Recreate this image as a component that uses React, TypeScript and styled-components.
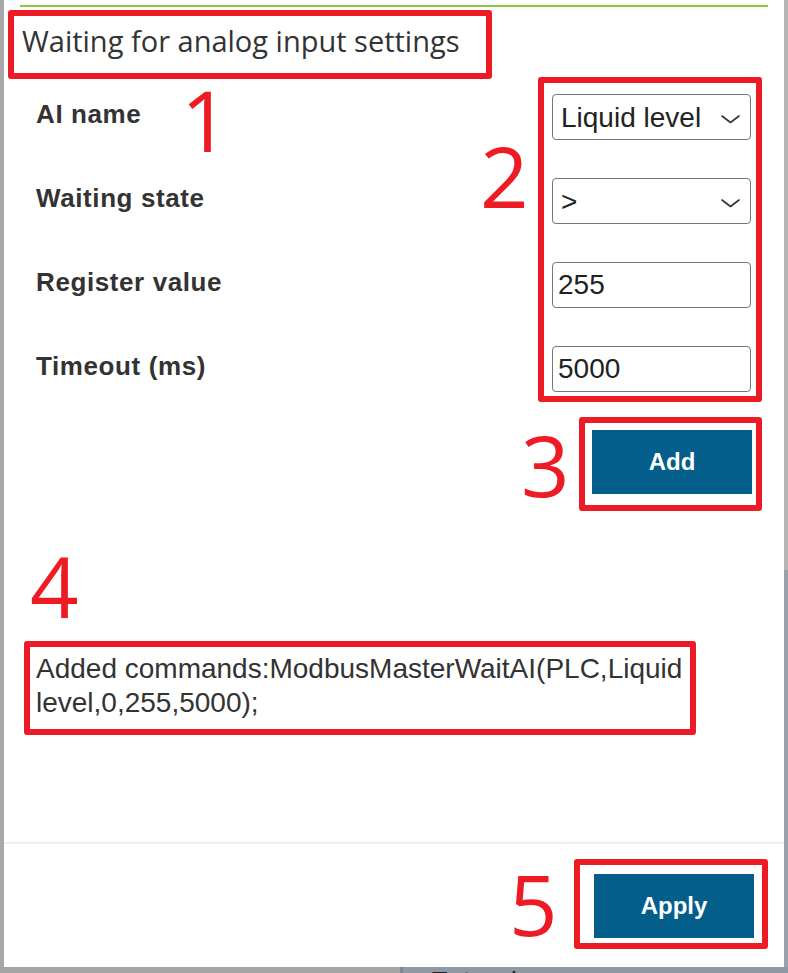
import React from 'react';
import styled, { createGlobalStyle } from 'styled-components';

const RED = '#ed1c24';
const BLUE = '#035e8c';
const TEXT = '#333333';

const GlobalStyle = createGlobalStyle`
  html, body { margin: 0; padding: 0; background: #a7a7a7; }
  body { width: 788px; height: 973px; overflow: hidden; }
  *, *::before, *::after { box-sizing: border-box; }
`;

const Page = styled.div`
  position: relative;
  width: 788px;
  height: 973px;
  overflow: hidden;
  display: flex;
  flex-direction: column;
  background: #a7a7a7;
`;

const TopRow = styled.div`
  display: flex;
  height: 967px;
`;

const LeftEdge = styled.div`
  width: 4px;
  background: #a8a8a8;
`;

const RightEdge = styled.div`
  width: 4px;
  background: linear-gradient(#b4b4b4 0 570px, #9aa1aa 570px);
`;

const Dialog = styled.div`
  width: 780px;
  background: #ffffff;
  display: flex;
  flex-direction: column;
`;

const GreenRule = styled.div`
  height: 2px;
  margin: 5px 16px 0 16px;
  background: #8dc63f;
`;

const Annot = styled.div`
  border: 6px solid ${RED};
  border-radius: 3px;
`;

const TitleBox = styled(Annot)`
  margin: 3px 0 0 4px;
  width: 484px;
  height: 69px;
  padding: 5px 0 0 8px;
`;

const Title = styled.h2`
  margin: 0;
  font-family: 'Open Sans', 'Noto Sans', sans-serif;
  font-weight: 400;
  font-size: 29px;
  line-height: 40px;
  color: ${TEXT};
  white-space: nowrap;
`;

const FormRow = styled.div`
  margin-top: -2px;
  padding: 0 22px 0 32px;
  display: flex;
  justify-content: space-between;
  align-items: flex-start;
`;

const LabelColumn = styled.div`
  padding-top: 14px;
  display: flex;
  flex-direction: column;
  gap: 38px;
`;

const Label = styled.div`
  height: 46px;
  line-height: 46px;
  font-family: 'Liberation Sans', Arial, sans-serif;
  font-weight: 700;
  font-size: 26px;
  letter-spacing: 0.6px;
  color: ${TEXT};
  white-space: nowrap;
`;

const FieldBox = styled(Annot)`
  width: 224px;
  padding: 11px 5px 4px 8px;
  display: flex;
  flex-direction: column;
  gap: 38px;
`;

const SelectWrap = styled.div`
  position: relative;
  width: 199px;
  height: 46px;
`;

const fieldBase = `
  width: 199px;
  height: 46px;
  border: 1.5px solid #767676;
  border-radius: 4px;
  background: #ffffff;
  font-family: 'Liberation Sans', Arial, sans-serif;
  font-size: 28px;
  color: #222222;
  outline: none;
  margin: 0;
`;

const Select = styled.select`
  ${fieldBase}
  appearance: none;
  -webkit-appearance: none;
  padding: 0 0 0 8px;
`;

const Chevron = styled.svg`
  position: absolute;
  right: 11px;
  top: 21px;
  pointer-events: none;
`;

const TextInput = styled.input`
  ${fieldBase}
  padding: 0 0 0 5px;
`;

const AddBox = styled(Annot)`
  align-self: flex-end;
  margin: 15px 22px 0 0;
  padding: 7px 4px 11px 7px;
`;

const PrimaryButton = styled.button`
  display: block;
  width: 160px;
  height: 64px;
  border: none;
  border-radius: 0;
  background: ${BLUE};
  color: #ffffff;
  font-family: 'Liberation Sans', Arial, sans-serif;
  font-weight: 700;
  font-size: 24px;
  cursor: pointer;
`;

const CommandBox = styled(Annot)`
  margin: 130px 0 0 20px;
  width: 672px;
  padding: 5px 0 9px 6px;
`;

const CommandText = styled.p`
  margin: 0;
  font-family: 'Liberation Sans', Arial, sans-serif;
  font-size: 28px;
  line-height: 34px;
  color: ${TEXT};
`;

const Footer = styled.div`
  margin-top: auto;
  height: 125px;
  border-top: 2px solid #efefef;
  padding: 15px 16px 0 0;
  display: flex;
  justify-content: flex-end;
  align-items: flex-start;
`;

const ApplyBox = styled(Annot)`
  padding: 9px 8px 5px 14px;
`;

const BottomStrip = styled.div`
  height: 6px;
  display: flex;
`;

const BottomLeft = styled.div`
  width: 400px;
  background: #a4a4a4;
`;

const BottomRight = styled.div`
  flex: 1;
  background: #8f98a5;
  border-left: 3px solid #7f8792;
  overflow: hidden;
  padding-left: 27px;
`;

const BackText = styled.span`
  display: block;
  font-family: 'Liberation Sans', Arial, sans-serif;
  font-size: 28px;
  line-height: 28px;
  margin-top: 1px;
  color: #222222;
`;

const Numeral = styled.span<{ $x: number; $y: number }>`
  position: absolute;
  left: ${(p) => p.$x}px;
  top: ${(p) => p.$y}px;
  font-family: 'Open Sans', 'Noto Sans', sans-serif;
  font-weight: 400;
  font-size: 85px;
  line-height: 85px;
  color: ${RED};
  pointer-events: none;
`;

const ChevronIcon = () => (
  <Chevron width="19" height="9" viewBox="0 0 19 9" fill="none">
    <path d="M1 1 L9.5 7.5 L18 1" stroke="#333" strokeWidth="1.6" strokeLinecap="round" strokeLinejoin="round" />
  </Chevron>
);

const labels = ['AI name', 'Waiting state', 'Register value', 'Timeout (ms)'];

const numerals = [
  { n: '1', x: 181, y: 77 },
  { n: '2', x: 480, y: 133 },
  { n: '3', x: 521, y: 422 },
  { n: '4', x: 30, y: 543 },
  { n: '5', x: 509, y: 861 },
];

export default function App() {
  return (
    <>
      <GlobalStyle />
      <Page>
        <TopRow>
          <LeftEdge />
          <Dialog>
            <GreenRule />
            <TitleBox>
              <Title>Waiting for analog input settings</Title>
            </TitleBox>
            <FormRow>
              <LabelColumn>
                {labels.map((l) => (
                  <Label key={l}>{l}</Label>
                ))}
              </LabelColumn>
              <FieldBox>
                <SelectWrap>
                  <Select defaultValue="Liquid level">
                    <option>Liquid level</option>
                  </Select>
                  <ChevronIcon />
                </SelectWrap>
                <SelectWrap>
                  <Select defaultValue=">">
                    <option>&gt;</option>
                    <option>&lt;</option>
                    <option>=</option>
                  </Select>
                  <ChevronIcon />
                </SelectWrap>
                <TextInput defaultValue="255" />
                <TextInput defaultValue="5000" />
              </FieldBox>
            </FormRow>
            <AddBox>
              <PrimaryButton>Add</PrimaryButton>
            </AddBox>
            <CommandBox>
              <CommandText>Added commands:ModbusMasterWaitAI(PLC,Liquid level,0,255,5000);</CommandText>
            </CommandBox>
            <Footer>
              <ApplyBox>
                <PrimaryButton>Apply</PrimaryButton>
              </ApplyBox>
            </Footer>
          </Dialog>
          <RightEdge />
        </TopRow>
        <BottomStrip>
          <BottomLeft />
          <BottomRight>
            <BackText>Extend</BackText>
          </BottomRight>
        </BottomStrip>
        {numerals.map((d) => (
          <Numeral key={d.n} $x={d.x} $y={d.y}>
            {d.n}
          </Numeral>
        ))}
      </Page>
    </>
  );
}
